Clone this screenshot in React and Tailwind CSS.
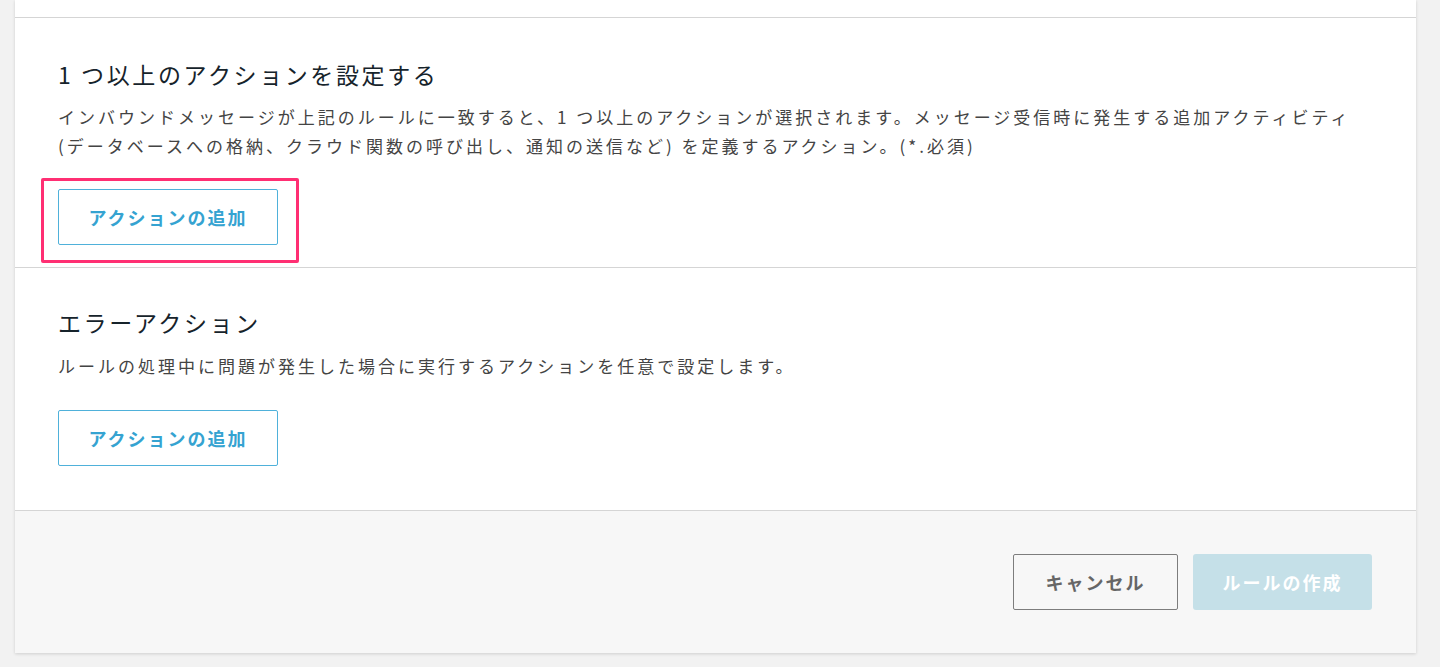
export default function App() {
  const font = { fontFamily: '"Noto Sans CJK JP", "Noto Sans", sans-serif' };

  return (
    <div className="min-h-[667px] bg-[#f2f2f2] pl-[15px] pr-[24px]" style={font}>
      <div className="bg-white shadow-[0_1px_3px_rgba(0,0,0,0.15)]">
        {/* tail of the previous section */}
        <div className="h-[18px] border-b border-[#d5d5d5]" />

        {/* actions */}
        <section className="pl-[43px] pr-[30px] pt-[41px] pb-[22px] border-b border-[#d5d5d5]">
          <h2 className="text-[23px] leading-[30px] tracking-[2.6px] text-[#16232b]">1 つ以上のアクションを設定する</h2>
          <p className="mt-[13px] text-[17px] leading-[29px] tracking-[3px] text-[#444]">
            インバウンドメッセージが上記のルールに一致すると、1 つ以上のアクションが選択されます。メッセージ受信時に発生する追加アクティビティ
            <br />
            (データベースへの格納、クラウド関数の呼び出し、通知の送信など) を定義するアクション。(*.必須)
          </p>
          <div className="relative mt-[29px] w-[220px]">
            <button className="h-[56px] w-[220px] rounded-[2px] border border-[#4fb1da] text-[18px] font-bold tracking-[2px] text-[#35a3d1]">
              アクションの追加
            </button>
            <div className="pointer-events-none absolute -left-[17px] -top-[11px] h-[85px] w-[258px] rounded-[2px] border-[3px] border-[#ff2f73]" />
          </div>
        </section>

        {/* error action */}
        <section className="pl-[43px] pr-[30px] pt-[39px] pb-[44px] border-b border-[#d5d5d5]">
          <h2 className="text-[23px] leading-[30px] tracking-[2.6px] text-[#16232b]">エラーアクション</h2>
          <p className="mt-[14px] text-[17px] leading-[29px] tracking-[3px] text-[#444]">
            ルールの処理中に問題が発生した場合に実行するアクションを任意で設定します。
          </p>
          <button className="mt-[30px] h-[56px] w-[220px] rounded-[2px] border border-[#4fb1da] text-[18px] font-bold tracking-[2px] text-[#35a3d1]">
            アクションの追加
          </button>
        </section>

        {/* footer */}
        <div className="flex h-[142px] items-center justify-end gap-[15px] bg-[#f7f7f7] pr-[44px]">
          <button className="h-[56px] w-[165px] rounded-[2px] border-[1.5px] border-[#7d7d7d] bg-[#f7f7f7] text-[18px] font-bold tracking-[2px] text-[#666]">
            キャンセル
          </button>
          <button className="h-[56px] w-[179px] rounded-[3px] bg-[#c5e0e8] text-[18px] font-bold tracking-[2px] text-white">
            ルールの作成
          </button>
        </div>
      </div>
    </div>
  );
}
